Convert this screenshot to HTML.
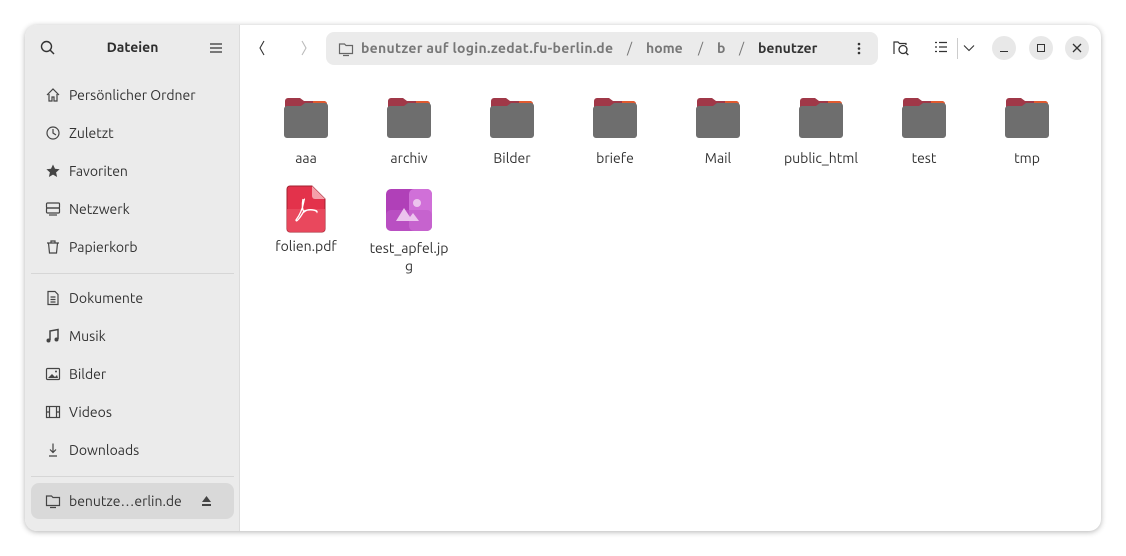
<!DOCTYPE html>
<html><head><meta charset="utf-8"><style>
*{margin:0;padding:0;box-sizing:border-box}
body{width:1126px;height:556px;background:#fff;font-family:"Ubuntu","Liberation Sans",sans-serif;color:#333;position:relative;overflow:hidden}
.win{position:absolute;left:25px;top:25px;width:1076px;height:506px;border-radius:12px;background:#fff;box-shadow:0 1px 6px rgba(0,0,0,.3);overflow:hidden}
.side{position:absolute;left:0;top:0;width:215px;height:506px;background:#ebebeb;border-right:1px solid #dcdcdc}
.title{position:absolute;left:0;width:215px;top:14px;text-align:center;font-weight:bold;font-size:14px;color:#2e2e2e}
.item{position:absolute;left:20px;font-size:14px;color:#333;height:20px;line-height:20px}
.item svg{position:absolute;left:0;top:2px}
.item span{position:absolute;left:24px;white-space:nowrap}
.sep{position:absolute;left:6px;width:203px;height:1px;background:#d6d6d6}
.path{position:absolute;left:301px;top:7px;width:552px;height:33px;background:#ebebeb;border-radius:8px;font-size:14px;color:#555}
.path span{position:absolute;top:8px;white-space:nowrap}
.f{position:absolute;width:100px;text-align:center;font-size:14px;color:#333;line-height:18px}
.f svg{display:block;margin:0 auto 10px}
.cb{position:absolute;top:11px;width:24px;height:24px;border-radius:12px;background:#e8e8e8}
</style></head><body>
<div class="win">
<div class="side">
<svg style="position:absolute;left:15px;top:15px" width="16" height="16" viewBox="0 0 16 16"><circle cx="6.5" cy="6.5" r="5" fill="none" stroke="#333" stroke-width="1.4"/><path d="M10 10l4 4" stroke="#333" stroke-width="1.5"/></svg>
<div class="title">Dateien</div>
<svg style="position:absolute;left:185px;top:17px" width="12" height="12"><path d="M0 2h12M0 6h12M0 10h12" stroke="#333" stroke-width="1.2"/></svg>
<div class="item" style="top:60px"><svg width="16" height="16"><path d="M2 8L8 2l6 6M4 7v7h3v-4h2v4h3V7" fill="none" stroke="#444" stroke-width="1.2"/></svg><span>Persönlicher Ordner</span></div>
<div class="item" style="top:98px"><svg width="16" height="16"><circle cx="8" cy="8" r="6" fill="none" stroke="#444" stroke-width="1.2"/><path d="M8 4v4l3 2" fill="none" stroke="#444" stroke-width="1.2"/></svg><span>Zuletzt</span></div>
<div class="item" style="top:136px"><svg width="16" height="16"><path d="M8 1.5l2 4.3 4.6.5-3.5 3.1 1 4.6L8 11.6 3.9 14l1-4.6L1.4 6.3 6 5.8z" fill="#444"/></svg><span>Favoriten</span></div>
<div class="item" style="top:174px"><svg width="16" height="16"><rect x="1.5" y="2" width="13" height="5" rx="1" fill="none" stroke="#444" stroke-width="1.2"/><rect x="1.5" y="7" width="13" height="5" rx="1" fill="none" stroke="#444" stroke-width="1.2"/><path d="M4 14h8" stroke="#444" stroke-width="1.2"/></svg><span>Netzwerk</span></div>
<div class="item" style="top:212px"><svg width="16" height="16"><path d="M2 4h12M6 4V2h4v2M3.5 4l1 10h7l1-10" fill="none" stroke="#444" stroke-width="1.2"/></svg><span>Papierkorb</span></div>
<div class="sep" style="top:248px"></div>
<div class="item" style="top:263px"><svg width="16" height="16"><path d="M3 1.5h7l3 3v10H3z M5.5 7h5M5.5 9.5h5M5.5 12h5" fill="none" stroke="#444" stroke-width="1.2"/></svg><span>Dokumente</span></div>
<div class="item" style="top:301px"><svg width="16" height="16"><path d="M5 12V3l8-1.5V11" fill="none" stroke="#444" stroke-width="1.5"/><circle cx="3.5" cy="12.5" r="2" fill="#444"/><circle cx="11.5" cy="11.5" r="2" fill="#444"/></svg><span>Musik</span></div>
<div class="item" style="top:339px"><svg width="16" height="16"><rect x="1.5" y="2.5" width="13" height="11" rx="1" fill="none" stroke="#444" stroke-width="1.2"/><path d="M3 12l4-4 3 3 2-2 1 3z" fill="#444"/><circle cx="11" cy="5.5" r="1" fill="#444"/></svg><span>Bilder</span></div>
<div class="item" style="top:377px"><svg width="16" height="16"><rect x="1.5" y="2.5" width="13" height="11" fill="none" stroke="#444" stroke-width="1.2"/><path d="M4.5 2.5v11M11.5 2.5v11M1.5 8h3M11.5 8h3" stroke="#444" stroke-width="1.2"/></svg><span>Videos</span></div>
<div class="item" style="top:415px"><svg width="16" height="16"><path d="M8 1.5v9M5 7.5l3 3 3-3M4 14h8" fill="none" stroke="#444" stroke-width="1.2"/></svg><span>Downloads</span></div>
<div class="sep" style="top:451px"></div>
<div style="position:absolute;left:6px;top:458px;width:203px;height:36px;border-radius:8px;background:#d9d9d9"></div>
<div class="item" style="top:466px"><svg width="16" height="16"><path d="M1.5 3h5l1.5 1.5h6.5v8h-13z M5 14.5h6" fill="none" stroke="#444" stroke-width="1.2"/></svg><span>benutze…erlin.de</span></div>
<svg style="position:absolute;left:176px;top:471px" width="11" height="10"><path d="M5.5 0L10 6H1z M1 8h9v2H1z" fill="#444"/></svg>
</div>
<svg style="position:absolute;left:233px;top:15px" width="10" height="16"><path d="M6 1L2 8l4 7" fill="none" stroke="#333" stroke-width="1.1"/></svg>
<svg style="position:absolute;left:274px;top:15px" width="10" height="16"><path d="M3 1l4 7-4 7" fill="none" stroke="#bbb" stroke-width="1.1"/></svg>
<div class="path">
<svg style="position:absolute;left:12px;top:9px" width="16" height="16"><path d="M1.5 3h5l1.5 1.5h6.5v8h-13z M5 14.5h6" fill="none" stroke="#666" stroke-width="1.2"/></svg>
<span style="left:35px;font-weight:bold;color:#777;letter-spacing:0.3px">benutzer auf login.zedat.fu-berlin.de</span>
<span style="left:301px;color:#777">/</span>
<span style="left:320px;font-weight:bold;color:#777">home</span>
<span style="left:372px;color:#777">/</span>
<span style="left:391px;font-weight:bold;color:#777">b</span>
<span style="left:413px;color:#777">/</span>
<span style="left:432px;font-weight:bold;color:#333">benutzer</span>
<svg style="position:absolute;left:531px;top:10px" width="4" height="13"><circle cx="2" cy="2" r="1.3" fill="#333"/><circle cx="2" cy="6.5" r="1.3" fill="#333"/><circle cx="2" cy="11" r="1.3" fill="#333"/></svg>
</div>
<svg style="position:absolute;left:867px;top:14px" width="18" height="18"><path d="M2 15V3h4l1.5 1.5H14V6" fill="none" stroke="#333" stroke-width="1.2"/><circle cx="11" cy="10.5" r="4" fill="none" stroke="#333" stroke-width="1.3"/><path d="M13.8 13.5l2.5 2.5" stroke="#333" stroke-width="1.4"/></svg>
<svg style="position:absolute;left:909px;top:16px" width="14" height="13"><path d="M1 1.5h2M1 6h2M1 10.5h2M5 1.5h8M5 6h8M5 10.5h8" stroke="#333" stroke-width="1.3"/></svg>
<div style="position:absolute;left:932px;top:13px;width:1px;height:21px;background:#ccc"></div>
<svg style="position:absolute;left:938px;top:19px" width="12" height="8"><path d="M1 1.5l5 5 5-5" fill="none" stroke="#333" stroke-width="1.1"/></svg>
<div class="cb" style="left:967px"><div style="position:absolute;left:8px;top:15px;width:8px;height:1.4px;background:#333"></div></div>
<div class="cb" style="left:1004px"><div style="position:absolute;left:8px;top:8px;width:8px;height:8px;border:1.3px solid #333"></div></div>
<div class="cb" style="left:1040px"><svg style="position:absolute;left:7px;top:7px" width="10" height="10"><path d="M1 1l8 8M9 1l-8 8" stroke="#333" stroke-width="1.3"/></svg></div>

<div class="f" style="left:231px;top:72px"><svg width="46" height="42" viewBox="0 0 46 42"><path d="M2 4a3 3 0 0 1 3-3h12l4 3h20a3 3 0 0 1 3 3v6H2z" fill="#a03848"/><path d="M30 4h11a3 3 0 0 1 3 3v6H30z" fill="#e05a30"/><path d="M1 12a3 3 0 0 1 3-3h14l4-3h20a3 3 0 0 1 3 3v29a3 3 0 0 1-3 3H4a3 3 0 0 1-3-3z" fill="#6e6e6e"/></svg>aaa</div>
<div class="f" style="left:334px;top:72px"><svg width="46" height="42" viewBox="0 0 46 42"><path d="M2 4a3 3 0 0 1 3-3h12l4 3h20a3 3 0 0 1 3 3v6H2z" fill="#a03848"/><path d="M30 4h11a3 3 0 0 1 3 3v6H30z" fill="#e05a30"/><path d="M1 12a3 3 0 0 1 3-3h14l4-3h20a3 3 0 0 1 3 3v29a3 3 0 0 1-3 3H4a3 3 0 0 1-3-3z" fill="#6e6e6e"/></svg>archiv</div>
<div class="f" style="left:437px;top:72px"><svg width="46" height="42" viewBox="0 0 46 42"><path d="M2 4a3 3 0 0 1 3-3h12l4 3h20a3 3 0 0 1 3 3v6H2z" fill="#a03848"/><path d="M30 4h11a3 3 0 0 1 3 3v6H30z" fill="#e05a30"/><path d="M1 12a3 3 0 0 1 3-3h14l4-3h20a3 3 0 0 1 3 3v29a3 3 0 0 1-3 3H4a3 3 0 0 1-3-3z" fill="#6e6e6e"/></svg>Bilder</div>
<div class="f" style="left:540px;top:72px"><svg width="46" height="42" viewBox="0 0 46 42"><path d="M2 4a3 3 0 0 1 3-3h12l4 3h20a3 3 0 0 1 3 3v6H2z" fill="#a03848"/><path d="M30 4h11a3 3 0 0 1 3 3v6H30z" fill="#e05a30"/><path d="M1 12a3 3 0 0 1 3-3h14l4-3h20a3 3 0 0 1 3 3v29a3 3 0 0 1-3 3H4a3 3 0 0 1-3-3z" fill="#6e6e6e"/></svg>briefe</div>
<div class="f" style="left:643px;top:72px"><svg width="46" height="42" viewBox="0 0 46 42"><path d="M2 4a3 3 0 0 1 3-3h12l4 3h20a3 3 0 0 1 3 3v6H2z" fill="#a03848"/><path d="M30 4h11a3 3 0 0 1 3 3v6H30z" fill="#e05a30"/><path d="M1 12a3 3 0 0 1 3-3h14l4-3h20a3 3 0 0 1 3 3v29a3 3 0 0 1-3 3H4a3 3 0 0 1-3-3z" fill="#6e6e6e"/></svg>Mail</div>
<div class="f" style="left:746px;top:72px"><svg width="46" height="42" viewBox="0 0 46 42"><path d="M2 4a3 3 0 0 1 3-3h12l4 3h20a3 3 0 0 1 3 3v6H2z" fill="#a03848"/><path d="M30 4h11a3 3 0 0 1 3 3v6H30z" fill="#e05a30"/><path d="M1 12a3 3 0 0 1 3-3h14l4-3h20a3 3 0 0 1 3 3v29a3 3 0 0 1-3 3H4a3 3 0 0 1-3-3z" fill="#6e6e6e"/></svg>public_html</div>
<div class="f" style="left:849px;top:72px"><svg width="46" height="42" viewBox="0 0 46 42"><path d="M2 4a3 3 0 0 1 3-3h12l4 3h20a3 3 0 0 1 3 3v6H2z" fill="#a03848"/><path d="M30 4h11a3 3 0 0 1 3 3v6H30z" fill="#e05a30"/><path d="M1 12a3 3 0 0 1 3-3h14l4-3h20a3 3 0 0 1 3 3v29a3 3 0 0 1-3 3H4a3 3 0 0 1-3-3z" fill="#6e6e6e"/></svg>test</div>
<div class="f" style="left:952px;top:72px"><svg width="46" height="42" viewBox="0 0 46 42"><path d="M2 4a3 3 0 0 1 3-3h12l4 3h20a3 3 0 0 1 3 3v6H2z" fill="#a03848"/><path d="M30 4h11a3 3 0 0 1 3 3v6H30z" fill="#e05a30"/><path d="M1 12a3 3 0 0 1 3-3h14l4-3h20a3 3 0 0 1 3 3v29a3 3 0 0 1-3 3H4a3 3 0 0 1-3-3z" fill="#6e6e6e"/></svg>tmp</div>

<div class="f" style="left:231px;top:160px"><svg width="40" height="48" viewBox="0 0 40 48" style="margin-bottom:4px"><path d="M4 1h22l13 13v30a3 3 0 0 1-3 3H4a3 3 0 0 1-3-3V4a3 3 0 0 1 3-3z" fill="#e3324b" stroke="#a0202f" stroke-width="1"/><path d="M1 24h38v20a3 3 0 0 1-3 3H4a3 3 0 0 1-3-3z" fill="#ea4e62" opacity=".8"/><path d="M26 1v10a3 3 0 0 0 3 3h10z" fill="#f5a0aa"/><path d="M19 14c-2 0 0 9-9 21c0 3 4-2 8-9c6-2 12-1 13 1c1-2-9-4-13 0c-2-3-2-8-1-13" fill="none" stroke="#fff" stroke-width="1.3"/></svg>folien.pdf</div>
<div class="f" style="left:334px;top:164px"><svg width="46" height="42" viewBox="0 0 46 42" style="margin-bottom:8px"><rect x="0" y="0" width="46" height="42" rx="5" fill="#b040b8"/><rect x="23" y="0" width="23" height="42" rx="5" fill="#d070d8"/><rect x="0" y="21" width="46" height="21" rx="5" fill="#c05ac8" opacity=".6"/><path d="M10 32l8-13 6 9 3-4 6 8z" fill="#ecc4ee"/><circle cx="31" cy="14" r="4" fill="#ecc4ee"/></svg>test_apfel.jp<br>g</div>
</div>
</body></html>
